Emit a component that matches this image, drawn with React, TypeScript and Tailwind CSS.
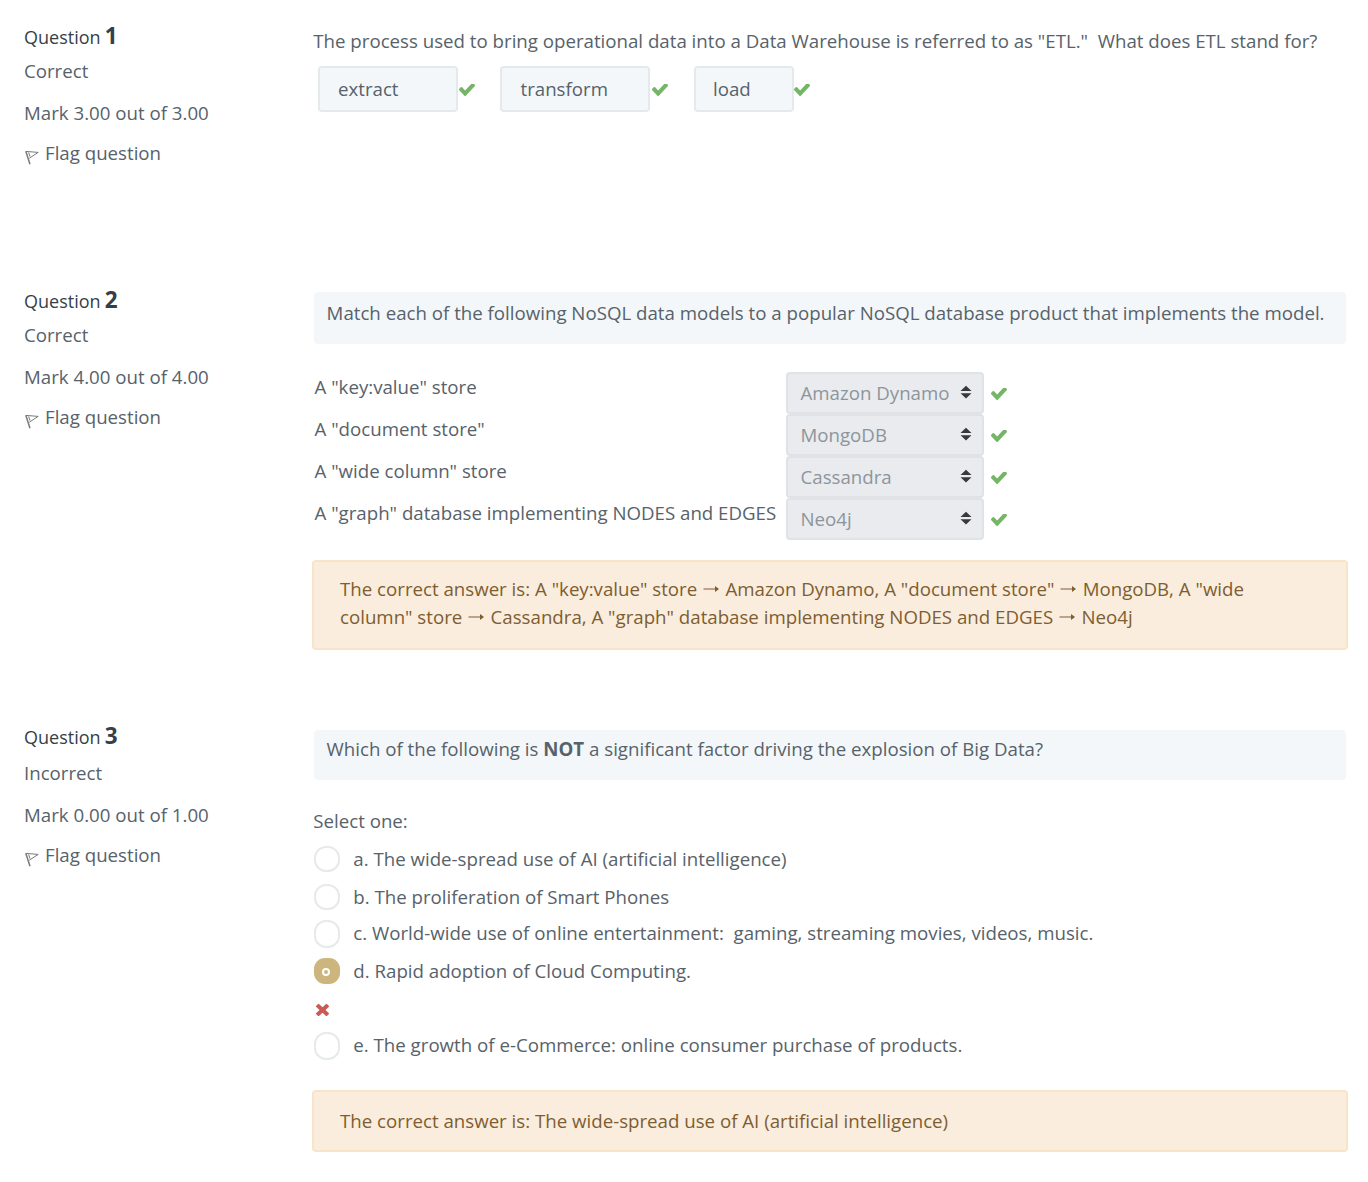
import type { ReactNode } from "react";

function Check({ className = "" }: { className?: string }) {
  return (
    <svg viewBox="121 434 1550 1088" preserveAspectRatio="none" className={`h-3 w-4 shrink-0 fill-[#74b566] ${className}`}>
      <path d="M1671 566q0 40-28 68l-724 724-136 136q-28 28-68 28t-68-28l-136-136-362-362q-28-28-28-68t28-68l136-136q28-28 68-28t68 28l294 295 656-657q28-28 68-28t68 28l136 136q28 28 28 68z" />
    </svg>
  );
}

function Cross() {
  return (
    <svg viewBox="302 366 1188 1188" className="ml-1 h-3 w-[13px] fill-[#cb5a55]" preserveAspectRatio="none">
      <path d="M1490 1322q0 40-28 68l-136 136q-28 28-68 28t-68-28l-294-294-294 294q-28 28-68 28t-68-28l-136-136q-28-28-28-68t28-68l294-294-294-294q-28-28-28-68t28-68l136-136q28-28 68-28t68 28l294 294 294-294q28-28 68-28t68 28l136 136q28 28 28 68t-28 68l-294 294 294 294q28 28 28 68z" />
    </svg>
  );
}

function Flag() {
  return (
    <svg viewBox="0 0 14 15" className="mt-[11px] mr-1.5 ml-px h-[15px] w-3.5 shrink-0" fill="none" stroke="#777b7d">
      <path d="M.8 1.2 5 14.2" strokeWidth="1.5" />
      <path d="M.8 1.4 13.2 2.4 4.3 8.2M3.6 2.4 5 6.6" strokeWidth="1" />
    </svg>
  );
}

function Question({ n, status, mark, height, shifted = false, children }: { n: number; status: string; mark: string; height: string; shifted?: boolean; children: ReactNode }) {
  return (
    <section className={`flex ${height}`}>
      <aside className="w-[288px] shrink-0 pt-[22px]">
        <h3 className="h-7 text-[18px] text-[#343f49]">
          Question <span className="-ml-[0.5px] text-[22.5px] font-bold">{n}</span>
        </h3>
        <div className={shifted ? "mt-[9px]" : "mt-[7px]"}>{status}</div>
        <div className="mt-3.5">{mark}</div>
        <div className="mt-3 flex"><Flag />Flag question</div>
      </aside>
      <div className="w-[1036px] shrink-0">{children}</div>
    </section>
  );
}

function Blank({ children, className }: { children: ReactNode; className: string }) {
  return <div className={`flex h-[46px] items-center rounded-[4px] border-2 border-[#e4eaec] bg-[#f3f7fa] ${className}`}>{children}</div>;
}

const matches = [
  ['A "key:value" store', "Amazon Dynamo"],
  ['A "document store"', "MongoDB"],
  ['A "wide column" store', "Cassandra"],
  ['A "graph" database implementing NODES and EDGES', "Neo4j"],
];

function Match({ label, value }: { label: string; value: string }) {
  return (
    <div className="flex h-[42px]">
      <div className="w-[472px] shrink-0 pt-px pl-[0.5px]">{label}</div>
      <div className="flex h-[42px] w-[198px] items-center justify-between rounded-[4px] border-2 border-[#dfe2e7] bg-[#e9ebef] pr-2.5 pl-[12.5px] text-[#8d959b]">
        {value}
        <svg viewBox="0 0 12 14" className="mb-0.5 h-3.5 w-3 shrink-0 fill-[#343a40]"><path d="M.5 6 6 .8 11.5 6ZM.5 8.2H11.5L6 13.4Z" /></svg>
      </div>
      <Check className="mt-[15.5px] ml-[7px]" />
    </div>
  );
}

function Option({ children, selected = false, className = "h-[38px]", radio = "h-[26px]" }: { children: ReactNode; selected?: boolean; className?: string; radio?: string }) {
  return (
    <div className={`flex items-start ${className}`}>
      {selected ? (
        <span className="ml-0.5 flex h-[26px] w-[26px] items-center justify-center rounded-[11px] bg-[#cdb67d] pr-0.5 pt-0.5">
          <span className="h-2 w-2 rounded-full border-2 border-white" />
        </span>
      ) : (
        <span className={`ml-0.5 w-[26px] rounded-[12px] border-2 border-[#e6eaec] ${radio}`} />
      )}
      <span className="-mt-px ml-[13.3px] whitespace-pre">{children}</span>
    </div>
  );
}

function Answer({ children, className }: { children: ReactNode; className: string }) {
  return <div className={`rounded-[4px] border-2 border-[#f8e5c9] bg-[#faeddd] pl-[26px] text-[#7d5d32] ${className}`}>{children}</div>;
}

function Arrow() {
  return (
    <svg viewBox="0 0 18.6 10" className="inline-block h-2.5 w-[18.6px] align-[2px]" fill="currentColor"><path d="M1.5 4.4H13V2L17 5 13 8V5.6H1.5Z" /></svg>
  );
}

export default function App() {
  return (
    <main className="h-[1182px] w-[1368px] overflow-hidden bg-white pl-6 font-['Open_Sans',sans-serif] text-[18.68px] leading-7 text-[#57626a]">
      <Question n={1} status="Correct" mark="Mark 3.00 out of 3.00" height="h-[264px]">
        <p className="mt-[27px] pl-[1.3px] whitespace-pre">{'The process used to bring operational data into a Data Warehouse is referred to as "ETL."  What does ETL stand for?'}</p>
        <div className="mt-[11px] flex items-center pl-1.5">
          <Blank className="w-[140px] pl-[18px]">extract</Blank><Check className="mt-px ml-px" />
          <Blank className="ml-[25px] w-[150px] pl-[18.5px]">transform</Blank><Check className="mt-px ml-[2px]" />
          <Blank className="ml-[26px] w-[100px] pl-[17px]">load</Blank><Check className="mt-px" />
        </div>
      </Question>
      <Question n={2} status="Correct" mark="Mark 4.00 out of 4.00" height="h-[436px]">
        <p className="mt-7 ml-0.5 h-[52px] w-[1032px] rounded-[4px] bg-[#f3f7fa] pt-[7px] pl-[12.6px]">Match each of the following NoSQL data models to a popular NoSQL database product that implements the model.</p>
        <div className="mt-7 pl-0.5">
          {matches.map(([label, value]) => <Match key={value} label={label} value={value} />)}
        </div>
        <Answer className="mt-5 h-[90px] pt-[13px]">
          The correct answer is: A "key:value" store <Arrow /> Amazon Dynamo, A "document store" <Arrow /> MongoDB, A "wide<br />
          column" store <Arrow /> Cassandra, A "graph" database implementing NODES and EDGES <Arrow /> Neo4j
        </Answer>
      </Question>
      <Question n={3} status="Incorrect" mark="Mark 0.00 out of 1.00" height="h-[482px]" shifted>
        <p className="mt-[30px] ml-0.5 h-[50px] w-[1032px] rounded-[4px] bg-[#f3f7fa] pt-[5px] pl-[12.6px]">Which of the following is <strong>NOT</strong> a significant factor driving the explosion of Big Data?</p>
        <p className="mt-[27px] pl-[1.3px]">Select one:</p>
        <div className="mt-[11px]">
          <Option>a. The wide-spread use of AI (artificial intelligence)</Option>
          <Option className="h-9">b. The proliferation of Smart Phones</Option>
          <Option radio="h-7">{"c. World-wide use of online entertainment:  gaming, streaming movies, videos, music."}</Option>
          <Option selected>d. Rapid adoption of Cloud Computing.</Option>
          <div className="flex h-9 pt-2"><Cross /></div>
          <Option radio="h-7">e. The growth of e-Commerce: online consumer purchase of products.</Option>
        </div>
        <Answer className="mt-5 h-[62px] pt-[15px]">The correct answer is: The wide-spread use of AI (artificial intelligence)</Answer>
      </Question>
    </main>
  );
}
